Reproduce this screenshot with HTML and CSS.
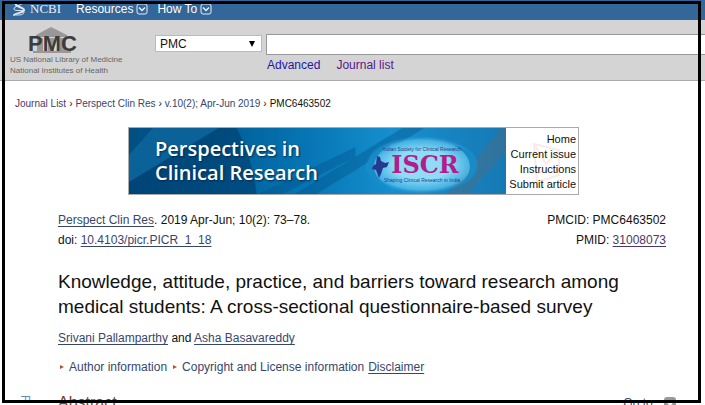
FILE: index.html
```html
<!DOCTYPE html>
<html lang="en">
<head>
    <meta charset="UTF-8">
    <title>Knowledge, attitude, practice, and barriers toward research among medical students - PMC</title>
    <link rel="stylesheet" href="styles.css">
</head>
<body>
    <nav class="topbar">
        <a class="ncbi" href="#">
            <svg width="14" height="18" viewBox="0 0 14 18" fill="none" stroke="#dce8f4" stroke-linecap="round">
                <path d="M4 2C1 7 12 7 12 10S6 12 2 15" stroke-width="2"/>
                <path d="M11 3C8 6 2 6 2 9s10 0 10 3-4 3-8 3"/>
            </svg>
            NCBI
        </a>
        <button type="button" class="menu-button">Resources
            <svg width="12" height="12" viewBox="0 0 12 12" fill="none" stroke="#e8f0f8"><rect x="1" y="1" width="10" height="10" rx="2"/><path d="M3 4.500l3 3 3-3" stroke-width="1.500"/></svg>
        </button>
        <button type="button" class="menu-button">How To
            <svg width="12" height="12" viewBox="0 0 12 12" fill="none" stroke="#e8f0f8"><rect x="1" y="1" width="10" height="10" rx="2"/><path d="M3 4.500l3 3 3-3" stroke-width="1.500"/></svg>
        </button>
    </nav>

    <header class="header">
        <a class="pmc" href="#">
            <svg width="52" height="28" viewBox="0 0 52 28">
                <path d="M9 9L24 1l16 8v2H9zM10 12h6v13h-6zM21 12h6v13h-6zM33 12h6v13h-6zM6 25h38v2H6z" fill="#989898"/>
                <text x="1" y="25" class="pmc-letters">PMC</text>
            </svg>
            <span>US National Library of Medicine</span>
            <span>National Institutes of Health</span>
        </a>
        <form class="search">
            <select class="database" aria-label="Database">
                <option>PMC</option>
            </select>
            <div class="search-main">
                <input type="text" class="term" aria-label="Search term">
                <div class="search-links">
                    <a class="advanced" href="#">Advanced</a>
                    <a class="journals" href="#">Journal list</a>
                </div>
            </div>
        </form>
    </header>

    <nav class="breadcrumb" aria-label="Breadcrumb">
        <a class="visited" href="#">Journal List</a><span>›</span><a href="#">Perspect Clin Res</a><span>›</span><a href="#">v.10(2); Apr-Jun 2019</a><span>›</span>PMC6463502
    </nav>

    <main class="article">
        <div class="banner">
            <div class="banner-art">
                <svg class="banner-bg" viewBox="0 0 378 66" preserveAspectRatio="none">
                    <defs>
                        <linearGradient id="sea">
                            <stop offset="0" stop-color="#004f82"/>
                            <stop offset=".25" stop-color="#005f97"/>
                            <stop offset=".5" stop-color="#0878b8"/>
                            <stop offset=".7" stop-color="#168fce"/>
                            <stop offset="1" stop-color="#1679b4"/>
                        </linearGradient>
                    </defs>
                    <rect width="378" height="66" fill="url(#sea)"/>
                    <path d="M0 27L24 0h66L0 54z" fill="#0a6299"/>
                    <path d="M0 54L90 0h18q16 30 20 66H0z" fill="#003f70" opacity=".65"/>
                    <path d="M130 66L227 19v10L154 66zM166 66L274 0h22L188 66z" fill="#00528a" opacity=".4"/>
                    <path d="M318 66L374 0h4v24l-38 42z" fill="#486e85" opacity=".5"/>
                </svg>
                <h2 class="banner-title">Perspectives in<br>Clinical Research</h2>
                <svg class="iscr" width="116" height="58" viewBox="0 0 116 58">
                    <defs>
                        <radialGradient id="glow">
                            <stop offset=".5" stop-color="#8fdcf6"/>
                            <stop offset=".85" stop-color="#5dc5ee" stop-opacity=".7"/>
                            <stop offset="1" stop-color="#2aa0da" stop-opacity="0"/>
                        </radialGradient>
                    </defs>
                    <ellipse cx="57" cy="29" rx="57" ry="29" fill="url(#glow)"/>
                    <path d="M26 9C-4 15-6 44 26 51C3 42 4 19 26 9zM88 9C118 15 120 44 88 51C111 42 110 19 88 9z" fill="#168bc7"/>
                    <path d="M12 20l3 1 1 4 4 2 4-1-2 5-4 1-2 6-2 4-3-8-4-1 1-3 3-2z" fill="#27388f"/>
                    <text x="57" y="15" class="iscr-small">Indian Society for Clinical Research</text>
                    <text x="60" y="37" class="iscr-big">ISCR</text>
                    <text x="57" y="46" class="iscr-small">Shaping Clinical Research in India</text>
                </svg>
            </div>
            <div class="banner-links">
                <svg class="banner-mark" width="32" height="44" viewBox="0 0 32 44" fill="none" stroke="#fbeae7" stroke-width="2"><path d="M3 4l25 6v25L6 42zM3 4l12 20 13-14"/></svg>
                <a href="#">Home</a>
                <a href="#">Current issue</a>
                <a href="#">Instructions</a>
                <a href="#">Submit article</a>
            </div>
        </div>

        <div class="citation">
            <div><a href="#">Perspect Clin Res</a>. 2019 Apr-Jun; 10(2): 73–78.<br>doi: <a href="#">10.4103/picr.PICR_1_18</a></div>
            <div class="ids">PMCID: PMC6463502<br>PMID: <a class="visited" href="#">31008073</a></div>
        </div>

        <h1 class="title">Knowledge, attitude, practice, and barriers toward research among medical students: A cross-sectional questionnaire-based survey</h1>

        <p class="authors"><a href="#">Srivani Pallamparthy</a> and <a href="#">Asha Basavareddy</a></p>

        <p class="notes">
            <a class="toggle" href="#">Author information</a>
            <a class="toggle" href="#">Copyright and License information</a>
            <a href="#">Disclaimer</a>
        </p>

        <div class="section-head">
            <h2>Abstract</h2>
            <a class="goto" href="#">Go to:
                <svg width="12" height="12" viewBox="0 0 12 12"><rect width="12" height="12" rx="3" fill="#999"/><path d="M3 4l3 4 3-4" fill="none" stroke="#fff" stroke-width="2"/></svg>
            </a>
        </div>
    </main>

    <aside class="side-tab">R</aside>
    <div class="frame"></div>
</body>
</html>
```
FILE: styles.css
```css
* {
    box-sizing: border-box;
}
body {
    margin: 0;
    height: 100vh;
    overflow: hidden;
    position: relative;
    font-family: "Liberation Sans", Arial, sans-serif;
    font-size: 12px;
    color: #111;
    background-color: #fff;
}
a {
    color: #37466b;
    text-underline-offset: 2px;
}
a.visited {
    color: #4c3869;
}
.topbar {
    display: flex;
    align-items: center;
    height: 20px;
    padding: 0 12px;
    background-color: #336699;
}
.ncbi {
    display: flex;
    align-items: center;
    gap: 4px;
    margin: 0 15px 2px 0;
    font-family: "Liberation Serif", "Times New Roman", serif;
    font-size: 13px;
    line-height: 16px;
    color: #e8f0f8;
    text-decoration: none;
}
.menu-button {
    display: flex;
    align-items: center;
    gap: 3px;
    margin: 0 9px 2px 0;
    padding: 0;
    border: none;
    background: none;
    font: inherit;
    color: #fff;
}
.header {
    display: flex;
    height: 61px;
    padding-left: 10px;
    background-color: #d4d4d4;
    border-bottom: 1px solid #aaa;
}
.pmc {
    display: flex;
    flex-direction: column;
    width: 145px;
    padding-top: 6px;
    font-size: 8px;
    line-height: 11px;
    color: #666;
    text-decoration: none;
}
.pmc svg {
    margin-left: 17px;
}
.pmc-letters {
    font-family: "Liberation Sans", Arial, sans-serif;
    font-size: 22px;
    font-weight: bold;
    fill: #3c3c3c;
}
.search {
    display: flex;
    flex: 1;
    gap: 4px;
    padding-top: 14px;
}
.database {
    appearance: none;
    width: 107px;
    height: 17px;
    margin-top: 1px;
    padding: 0 4px;
    border: 1px solid #bbb;
    border-radius: 0;
    font: inherit;
    color: #111;
    background: #fff url("data:image/svg+xml,%3Csvg xmlns='http://www.w3.org/2000/svg' width='6' height='6'%3E%3Cpath d='M0 0h6L3 6z'/%3E%3C/svg%3E") no-repeat right 6px center;
}
.search-main {
    flex: 1;
}
.term {
    display: block;
    width: 100%;
    height: 21px;
    border: 1px solid #999;
    border-right: none;
    font: inherit;
}
.search-links {
    display: flex;
    gap: 16px;
    padding: 3px 0 0 1px;
}
.search-links a {
    text-decoration: none;
}
.search-links .advanced {
    color: #1a1aaa;
}
.search-links .journals {
    color: #551a8b;
}
.breadcrumb {
    padding: 16px 15px 0;
    font-size: 10px;
    line-height: 14px;
}
.breadcrumb a {
    text-decoration: none;
}
.breadcrumb span {
    margin: 0 3px;
}
.article {
    padding: 16px 39px 0 58px;
}
.banner {
    display: flex;
    width: 451px;
    margin-left: 70px;
    border: 1px solid #aaa;
}
.banner-art {
    position: relative;
    display: flex;
    flex: 1;
    align-items: center;
    justify-content: space-between;
    padding: 0 25px 0 26px;
}
.banner-bg {
    position: absolute;
    inset: 0;
    width: 100%;
    height: 100%;
}
.banner-title {
    position: relative;
    margin: 0;
    font-family: "Open Sans", sans-serif;
    font-size: 20px;
    font-weight: 600;
    line-height: 24px;
    white-space: nowrap;
    color: #fff;
    text-shadow: 1px 1px 2px #002b4d;
}
.iscr {
    position: relative;
    margin-top: 8px;
}
.iscr-small {
    font-family: "Liberation Sans", Arial, sans-serif;
    font-size: 5px;
    text-anchor: middle;
    fill: #27388f;
}
.iscr-big {
    font-family: "DejaVu Serif", serif;
    font-size: 24px;
    font-weight: bold;
    text-anchor: middle;
    fill: #b21c8c;
}
.banner-links {
    position: relative;
    display: flex;
    flex-direction: column;
    width: 72px;
    padding: 4px 2px 2px 0;
    font-size: 11px;
    line-height: 15px;
    text-align: right;
    white-space: nowrap;
}
.banner-links a {
    position: relative;
    color: #111;
    text-decoration: none;
}
.banner-mark {
    position: absolute;
    top: 12px;
    left: 25px;
}
.citation {
    display: flex;
    justify-content: space-between;
    padding-top: 15px;
    line-height: 20px;
}
.ids {
    text-align: right;
}
.title {
    margin: 19px 0 0;
    font-size: 19px;
    font-weight: normal;
    line-height: 25px;
}
.authors {
    margin: 9px 0 0;
    line-height: 20px;
}
.notes {
    display: flex;
    gap: 4px;
    margin: 9px 0 0;
    line-height: 20px;
}
.toggle {
    display: flex;
    align-items: center;
    gap: 5px;
    text-decoration: none;
}
.toggle::before {
    content: "";
    margin-left: 2px;
    border-left: 4px solid #b0542f;
    border-top: 2px solid transparent;
    border-bottom: 2px solid transparent;
}
.section-head {
    display: flex;
    justify-content: space-between;
    margin-top: 17px;
}
.section-head h2 {
    margin: 0;
    font-size: 16px;
    font-weight: normal;
    line-height: 18px;
    color: #724128;
}
.goto {
    display: flex;
    gap: 8px;
    margin-right: -10px;
    line-height: 18px;
    text-decoration: none;
}
.goto svg {
    margin-top: 3px;
}
.side-tab {
    position: absolute;
    left: 18px;
    top: 395px;
    writing-mode: vertical-rl;
    font-size: 12px;
    color: #5b8dbb;
}
.frame {
    position: fixed;
    inset: 1px 4px 2px 2px;
    border: 3px solid #000;
    pointer-events: none;
}
```
